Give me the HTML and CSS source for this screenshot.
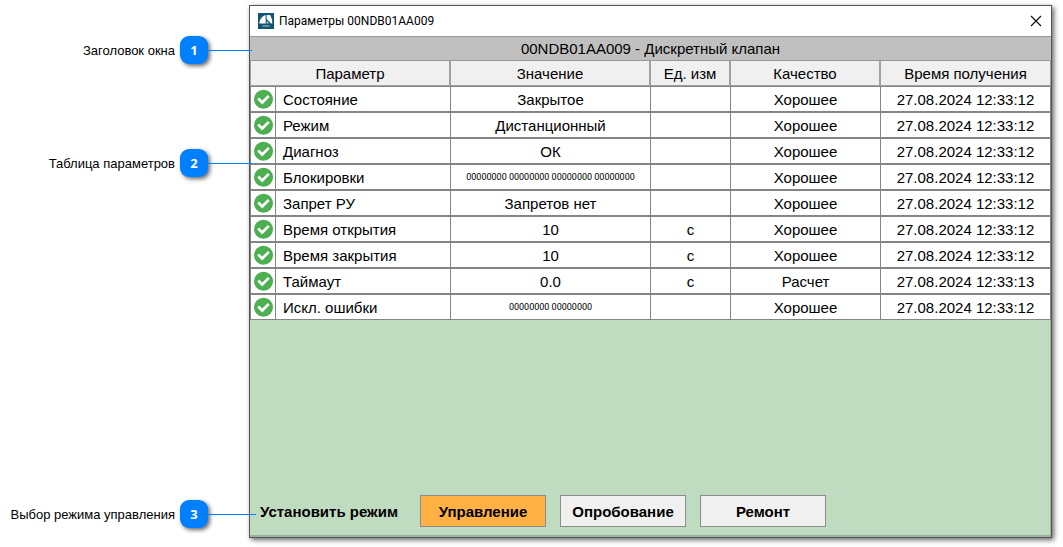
FILE: index.html
```html
<!DOCTYPE html>
<html lang="ru">
<head>
<meta charset="utf-8">
<title>Параметры 00NDB01AA009</title>
<link rel="stylesheet" href="styles.css">
</head>
<body>
<svg class="defs" aria-hidden="true">
  <symbol id="ok" viewBox="0 0 20 20">
    <circle cx="10.500" cy="10.300" r="9.500" fill="#4caf50"/>
    <path d="M5.200 9.500l4 4 6.600-6.600" fill="none" stroke="#fff" stroke-width="2.700"/>
  </symbol>
</svg>
<main class="page">
  <aside class="callouts">
    <div class="callout"><span class="callout-label">Заголовок окна</span><span class="badge">1</span><span class="line"></span></div>
    <div class="callout"><span class="callout-label">Таблица параметров</span><span class="badge">2</span><span class="line"></span></div>
    <div class="callout callout-last"><span class="callout-label">Выбор режима управления</span><span class="badge">3</span><span class="line line-long"></span></div>
  </aside>
  <section class="window">
    <header class="titlebar">
      <svg class="logo" viewBox="0 0 16 16" aria-hidden="true">
        <rect width="16" height="16" fill="#125674"/>
        <path d="M7.600 2v8.600H1.200C1.500 7 4 3 7.600 2z" fill="#fff"/>
        <path d="M8.700 2h3.300c1.500 2 2.200 5 2.300 8.600h-1.300L8.700 6z" fill="#fff"/>
        <path d="M8.700 7.500v3.100h2.300z" fill="#bcd0d8"/>
        <path d="M4.500 13h7" stroke="#8eafbc" stroke-width="1.300"/>
      </svg>
      <span class="window-name">Параметры 00NDB01AA009</span>
      <button class="close" type="button" aria-label="Закрыть">
        <svg class="close-icon" viewBox="0 0 12 12" aria-hidden="true"><path d="M1 1l10 10M11 1L1 11" stroke="#111" stroke-width="1.200"/></svg>
      </button>
    </header>
    <h1 class="heading">00NDB01AA009 - Дискретный клапан</h1>
    <table class="params">
      <colgroup><col class="c-icon"><col class="c-name"><col class="c-value"><col class="c-unit"><col class="c-quality"><col class="c-time"></colgroup>
      <thead><tr><th colspan="2">Параметр</th><th>Значение</th><th>Ед. изм</th><th>Качество</th><th>Время получения</th></tr></thead>
      <tbody>
        <tr><td><svg class="ok"><use href="#ok"/></svg></td><td class="name">Состояние</td><td>Закрытое</td><td></td><td>Хорошее</td><td>27.08.2024 12:33:12</td></tr>
        <tr><td><svg class="ok"><use href="#ok"/></svg></td><td class="name">Режим</td><td>Дистанционный</td><td></td><td>Хорошее</td><td>27.08.2024 12:33:12</td></tr>
        <tr><td><svg class="ok"><use href="#ok"/></svg></td><td class="name">Диагноз</td><td>ОК</td><td></td><td>Хорошее</td><td>27.08.2024 12:33:12</td></tr>
        <tr><td><svg class="ok"><use href="#ok"/></svg></td><td class="name">Блокировки</td><td class="bits">00000000 00000000 00000000 00000000</td><td></td><td>Хорошее</td><td>27.08.2024 12:33:12</td></tr>
        <tr><td><svg class="ok"><use href="#ok"/></svg></td><td class="name">Запрет РУ</td><td>Запретов нет</td><td></td><td>Хорошее</td><td>27.08.2024 12:33:12</td></tr>
        <tr><td><svg class="ok"><use href="#ok"/></svg></td><td class="name">Время открытия</td><td>10</td><td>с</td><td>Хорошее</td><td>27.08.2024 12:33:12</td></tr>
        <tr><td><svg class="ok"><use href="#ok"/></svg></td><td class="name">Время закрытия</td><td>10</td><td>с</td><td>Хорошее</td><td>27.08.2024 12:33:12</td></tr>
        <tr><td><svg class="ok"><use href="#ok"/></svg></td><td class="name">Таймаут</td><td>0.0</td><td>с</td><td>Расчет</td><td>27.08.2024 12:33:13</td></tr>
        <tr><td><svg class="ok"><use href="#ok"/></svg></td><td class="name">Искл. ошибки</td><td class="bits">00000000 00000000</td><td></td><td>Хорошее</td><td>27.08.2024 12:33:12</td></tr>
      </tbody>
    </table>
    <footer class="modes">
      <span class="modes-label">Установить режим</span>
      <button class="mode mode-active" type="button">Управление</button>
      <button class="mode" type="button">Опробование</button>
      <button class="mode" type="button">Ремонт</button>
    </footer>
  </section>
</main>
</body>
</html>
```
FILE: styles.css
```css
* { box-sizing: border-box; }
body {
  margin: 0;
  background: #fff;
  color: #000;
  font-family: "Liberation Sans", Arial, sans-serif;
  font-size: 15px;
}
.defs { position: absolute; width: 0; height: 0; }
.page {
  display: grid;
  grid-template-columns: 249px 1fr;
  min-height: 100vh;
  padding: 5px 11px 9px 0;
}
.callouts {
  display: flex;
  flex-direction: column;
  gap: 85px;
  padding: 31px 0 10px;
  position: relative;
  z-index: 1;
}
.callout {
  display: grid;
  grid-template-columns: 1fr 28px 41px;
  align-items: center;
}
.callout-last { margin-top: auto; }
.callout-label {
  padding-right: 5px;
  font-size: 13px;
  text-align: right;
  white-space: nowrap;
}
.badge {
  height: 28px;
  border-radius: 9px;
  background: #0080ff;
  box-shadow: 2px 2px 4px rgba(0, 0, 0, 0.6);
  color: #fff;
  font: bold 13px/28px "Open Sans", sans-serif;
  text-align: center;
}
.line { width: 44px; height: 1px; background: #0080ff; }
.line-long { width: 48px; }
.window {
  display: flex;
  flex-direction: column;
  min-width: 0;
  border: 1px solid #555;
  background: #c0dcc0;
  box-shadow: inset -1px -2px #9fb09f, 2px 2px 5px rgba(0, 0, 0, 0.6);
}
.titlebar {
  display: flex;
  align-items: center;
  height: 30px;
  padding: 0 9px 0 8px;
  background: #fff;
}
.logo { width: 16px; height: 16px; }
.window-name {
  flex: 1;
  padding-left: 5px;
  font: 12px Roboto, sans-serif;
}
.close {
  display: flex;
  padding: 0;
  border: 0;
  background: none;
}
.close-icon { width: 12px; height: 12px; }
.heading {
  margin: 0;
  height: 25px;
  border: solid #999;
  border-width: 1px 0;
  background: #c0c0c0;
  font-size: 15px;
  font-weight: normal;
  line-height: 23px;
  text-align: center;
}
.params {
  width: 100%;
  table-layout: fixed;
  border-collapse: separate;
  border-spacing: 0;
}
.c-icon { width: 25px; }
.c-name { width: 175px; }
.c-value { width: 200px; }
.c-unit { width: 80px; }
.c-quality { width: 150px; }
.params th {
  height: 25px;
  padding: 0;
  border: solid #a0a0a0;
  border-width: 0 1px 1px;
  background: #f0f0f0;
  font-weight: normal;
}
.params td {
  height: 26px;
  padding: 1px 0 0;
  border: solid #858585;
  border-width: 1px 0 1px 1px;
  background: #fff;
  line-height: 23px;
  text-align: center;
}
.params td:first-child { padding: 0; }
.params td:last-child { border-right-width: 1px; }
.params .name { padding-left: 7px; text-align: left; }
.params .bits { padding: 0; font: 9px Roboto, sans-serif; }
.ok { display: block; width: 20px; height: 20px; margin: 0 auto; }
.modes {
  display: flex;
  align-items: center;
  gap: 14px;
  margin-top: auto;
  padding: 0 10px 10px;
  font-weight: bold;
}
.modes-label { width: 146px; white-space: nowrap; }
.mode {
  width: 126px;
  height: 32px;
  padding: 0;
  border: 1px solid #8c8c8c;
  background: #f0f0f0;
  color: #000;
  font: inherit;
}
.mode-active { background: #ffb143; }
```
